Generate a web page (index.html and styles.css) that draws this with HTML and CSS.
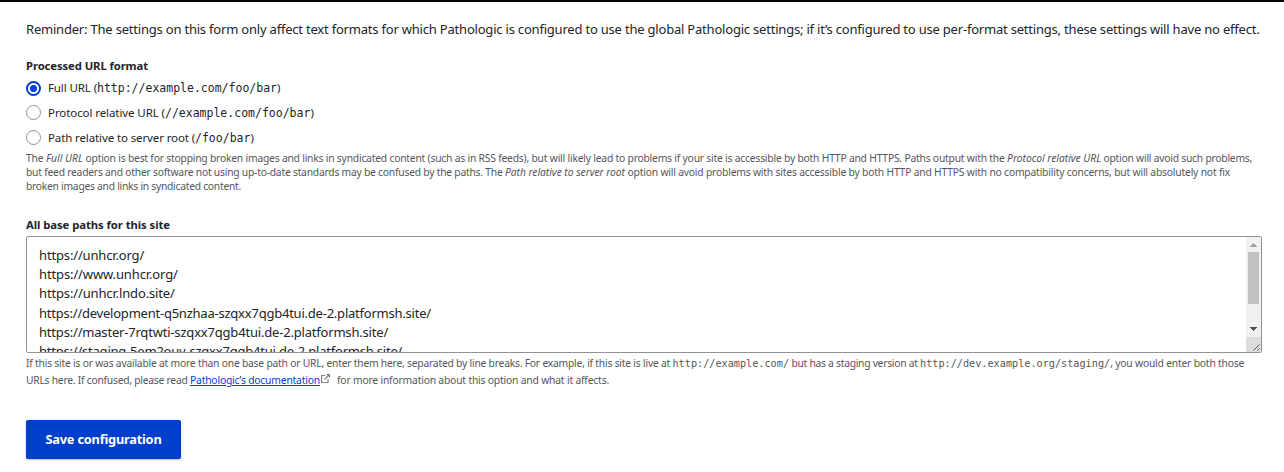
FILE: index.html
```html
<!DOCTYPE html>
<html lang="en">
<head>
<meta charset="utf-8">
<title>Pathologic configuration</title>
<link rel="stylesheet" href="styles.css">
</head>
<body>
<form class="settings">
<p class="reminder"><span class="t1">Reminder: The settings on this form only affect text formats for which Pathologic is configured to use the global Pathologic settings; if it’s configured to use per-format settings, these settings will have no effect.</span></p>
<div class="label format-label"><span class="t2">Processed URL format</span></div>
<div class="options">
<label class="option"><span class="radio checked"></span><span class="t3">Full URL (</span><code>http://example.com/foo/bar</code><span>)</span></label>
<label class="option"><span class="radio"></span><span class="t4">Protocol relative URL (</span><code>//example.com/foo/bar</code><span>)</span></label>
<label class="option"><span class="radio"></span><span class="t5">Path relative to server root (</span><code>/foo/bar</code><span>)</span></label>
</div>
<div class="help format-help">
<div><span class="t6">The </span><em class="t7">Full URL</em><span class="t8"> option is best for stopping broken images and links in syndicated content (such as in RSS feeds), but will likely lead to problems if your site is accessible by both HTTP and HTTPS. Paths output with the </span><em class="t9">Protocol relative URL</em><span class="t10"> option will avoid such problems,</span></div>
<div><span class="t11">but feed readers and other software not using up-to-date standards may be confused by the paths. The </span><em class="t12">Path relative to server root</em><span class="t13"> option will avoid problems with sites accessible by both HTTP and HTTPS with no compatibility concerns, but will absolutely not fix</span></div>
<div><span class="t14">broken images and links in syndicated content.</span></div>
</div>
<div class="label paths-label"><span class="t15">All base paths for this site</span></div>
<div class="textarea">
<div class="lines">
<div><span class="t16">https://unhcr.org/</span></div>
<div><span class="t17">https://www.unhcr.org/</span></div>
<div><span class="t18">https://unhcr.lndo.site/</span></div>
<div><span class="t19">https://development-q5nzhaa-szqxx7qgb4tui.de-2.platformsh.site/</span></div>
<div><span class="t20">https://master-7rqtwti-szqxx7qgb4tui.de-2.platformsh.site/</span></div>
<div><span class="t21">https://staging-5em2ouy-szqxx7qgb4tui.de-2.platformsh.site/</span></div>
</div>
<svg class="scrollbar" width="15" height="115" viewBox="0 0 15 115" shape-rendering="crispEdges">
<path fill="#f1f1f1" d="M0 0h15v100H0z"/><path fill="#c1c1c1" d="M2 15h11v52H2z"/><path fill="#a3a3a3" d="M7 6h1v1h1v1h1v1h1v1H4V9h1V8h1V7h1z"/><path fill="#505050" d="M4 90h7v1h-1v1H9v1H8v1H7v-1H6v-1H5v-1H4z"/><path fill="#dcdcdc" d="M0 100h15v15H0z"/><path stroke="#555" shape-rendering="auto" d="M7.500 113.500l6-6M11.500 113.500l2-2"/>
</svg>
</div>
<div class="help paths-help">
<div><span class="t22">If this site is or was available at more than one base path or URL, enter them here, separated by line breaks. For example, if this site is live at </span><code>http://example.com/</code><span class="t23">&nbsp;but has a staging version at </span><code>http://dev.example.org/staging/</code><span class="t24">, you would enter both those</span></div>
<div><span class="t25">URLs here. If confused, please read </span><a class="t26">Pathologic’s documentation</a><svg class="external" width="9" height="9" viewBox="0 0 9 9" fill="none" stroke="#858585" stroke-width="1.200"><path d="M4 1.500H.6v7h6.400V5"/><path d="M7.500 1.500L3.500 5.500"/><path fill="#858585" stroke="none" d="M5 0h4v4L7.700 2.700 6.300 1.300z"/></svg><span class="t27">for more information about this option and what it affects.</span></div>
</div>
<button type="button" class="save"><span class="t28">Save configuration</span></button>
</form>
</body>
</html>
```
FILE: styles.css
```css
* { box-sizing: border-box; }
body { margin: 0; background: #fff; color: #232429; font-family: "Noto Sans", "Open Sans", sans-serif; }
.settings { border-top: 2px solid #000; padding: 17px 22px 0 26px; height: 472px; overflow: hidden; display: flex; flex-direction: column; align-items: flex-start; }
.settings > * { flex: none; }
span, em, a, code { white-space: pre; }
.reminder { margin: 0; font-size: 13px; line-height: 20px; }
.label { font-size: 11.300px; font-weight: 700; line-height: 16px; }
.format-label { margin-top: 19px; }
.options { margin-top: 2px; display: flex; flex-direction: column; }
.option { height: 25px; display: flex; align-items: center; font-size: 11.500px; line-height: 18px; }
.option:first-child { height: 24px; }
.radio { width: 15px; height: 15px; margin-right: 7px; border: 1px solid #919297; border-radius: 50%; }
.radio.checked { border: 2px solid #003ecc; background: radial-gradient(circle, #0048e0 0 3.200px, #fff 4px); }
code { font-family: "DejaVu Sans Mono", monospace; font-size: 11.500px; }
.help { color: #55565b; font-size: 10.300px; }
.help code { font-size: 10.200px; line-height: 1; }
.format-help { line-height: 14px; margin-top: 1px; }
.paths-label { margin-top: 24px; }
.textarea { width: 1236px; height: 117px; margin-top: 3px; border: 1px solid #8e929c; border-radius: 2px; display: flex; justify-content: space-between; overflow: hidden; }
.lines { padding: 8.800px 12px 0; font-size: 13px; line-height: 19.250px; }
.scrollbar { display: block; flex: none; }
.paths-help { line-height: 17px; margin-top: 2px; }
.paths-help a { color: #003ecc; text-decoration: underline; }
.external { margin: 0 7px 1px 1px; }
.save { margin-top: 31px; width: 155px; height: 39px; border: 0; border-radius: 2px; background: #003ecc; color: #fff; font: 700 12.800px "Noto Sans", sans-serif; padding: 0 0 2px; box-shadow: 0 1px 2px rgba(0,0,0,.25); }
.t1 { letter-spacing: -.204px; }
.t2 { letter-spacing: -.101px; }
.t3 { letter-spacing: -.103px; }
.t4 { letter-spacing: -.082px; }
.t5 { letter-spacing: -.115px; }
.t6 { letter-spacing: -.145px; }
.t7 { letter-spacing: .041px; }
.t8 { letter-spacing: -.204px; }
.t9 { letter-spacing: -.028px; }
.t10 { letter-spacing: -.228px; }
.t11 { letter-spacing: -.226px; }
.t12 { letter-spacing: -.042px; }
.t13 { letter-spacing: -.186px; }
.t14 { letter-spacing: -.263px; }
.t15 { letter-spacing: -.066px; }
.t16 { letter-spacing: -.151px; }
.t17 { letter-spacing: -.122px; }
.t18 { letter-spacing: -.139px; }
.t19 { letter-spacing: -.226px; }
.t20 { letter-spacing: -.190px; }
.t21 { letter-spacing: -.217px; }
.t22 { letter-spacing: -.214px; }
.t23 { letter-spacing: -.270px; }
.t24 { letter-spacing: -.190px; }
.t25 { letter-spacing: -.242px; }
.t26 { letter-spacing: -.176px; }
.t27 { letter-spacing: -.181px; }
.t28 { letter-spacing: -.218px; }
```
